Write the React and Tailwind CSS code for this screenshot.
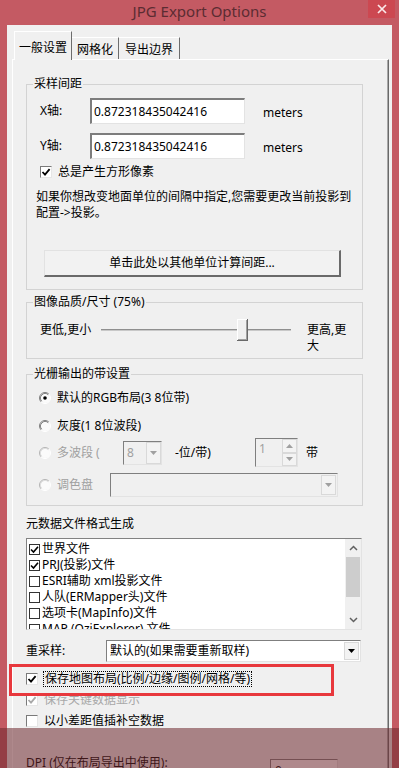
import React from "react";

const sunken =
  "border border-t-[#7f7f7f] border-l-[#7f7f7f] border-r-[#e3e3e3] border-b-[#e3e3e3]";

function Tick({ color = "#000" }) {
  return (
    <svg width="10" height="10" viewBox="0 0 10 10">
      <path d="M1.5 5 L4 7.6 L8.6 2.2" stroke={color} strokeWidth="1.8" fill="none" />
    </svg>
  );
}

function Check({ checked, disabled }) {
  return (
    <span
      className={
        "w-[12px] h-[12px] shrink-0 flex items-center justify-center bg-white border border-t-[#7a7a7a] border-l-[#7a7a7a] border-r-[#e6e6e6] border-b-[#e6e6e6]"
      }
    >
      {checked ? <Tick color={disabled ? "#a8a8a8" : "#000"} /> : null}
    </span>
  );
}

function ListCheck({ checked }) {
  return (
    <span className="w-[11px] h-[11px] shrink-0 flex items-center justify-center bg-white border border-[#333]">
      {checked ? (
        <svg width="9" height="9" viewBox="0 0 9 9">
          <path d="M1 4.5 L3.5 7 L8 1.8" stroke="#000" strokeWidth="1.6" fill="none" />
        </svg>
      ) : null}
    </span>
  );
}

function Radio({ selected, disabled }) {
  const dark = disabled ? "#b4b4b4" : "#808080";
  const dark2 = disabled ? "#cfcfcf" : "#404040";
  return (
    <svg width="12" height="12" viewBox="0 0 12 12" className="shrink-0">
      <circle cx="6" cy="6" r="5" fill="#fbfbfb" />
      <path d="M2.11 9.89 A5.5 5.5 0 0 1 9.89 2.11" stroke={dark} fill="none" />
      <path d="M2.82 9.18 A4.5 4.5 0 0 1 9.18 2.82" stroke={dark2} fill="none" strokeOpacity="0.6" />
      <path d="M9.89 2.11 A5.5 5.5 0 0 1 2.11 9.89" stroke="#ffffff" fill="none" />
      {selected ? <circle cx="6" cy="6" r="1.8" fill="#000" /> : null}
    </svg>
  );
}

function Arrow({ color = "#000", up = false }) {
  return (
    <svg width="7" height="4" viewBox="0 0 7 4">
      <polygon points={up ? "0,4 7,4 3.5,0" : "0,0 7,0 3.5,4"} fill={color} />
    </svg>
  );
}

function ArrowBtn({ color = "#000" }) {
  return (
    <div className="w-[15px] h-full shrink-0 bg-[#f3f3f3] border border-[#d9d9d9] flex items-center justify-center">
      <Arrow color={color} />
    </div>
  );
}

function Group({ title, className = "", children }) {
  return (
    <fieldset className={"ml-[13px] w-[337px] border border-[#d3d3d3] " + className}>
      <legend className="ml-[6px] px-[1px] leading-[16px]">{title}</legend>
      {children}
    </fieldset>
  );
}

export default function App() {
  const listItems = [
    ["世界文件", true],
    ["PRJ(投影)文件", true],
    ["ESRI辅助 xml投影文件", false],
    ["人队(ERMapper头)文件", false],
    ["选项卡(MapInfo)文件", false],
    ["MAP (OziExplorer) 文件", false],
  ];

  return (
    <div className="relative w-[399px] h-[768px] overflow-hidden bg-[#c45a63] font-['Noto_Sans','Noto_Sans_CJK_SC',sans-serif] text-[12px] leading-[16px] text-black">
      {/* Title bar */}
      <div className="relative h-[25px] flex justify-center">
        <span className="text-[15px] leading-[22px] text-[#5b2c32]">JPG Export Options</span>
        <div className="absolute right-[4px] top-0 w-[27px] h-[18px] bg-[#cc4851] flex items-center justify-center">
          <svg width="10" height="10" viewBox="0 0 10 10">
            <path d="M1 1 L9 9 M9 1 L1 9" stroke="#fbe9ea" strokeWidth="1.7" />
          </svg>
        </div>
      </div>

      <div className="flex">
        <div className="w-[7px] shrink-0" />
        <div className="w-[385px] h-[743px] bg-[#f0f0f0] flex flex-col">
          {/* Tabs */}
          <div className="h-[34px] shrink-0 flex items-end pl-[7px]">
            <div className="relative z-10 -mb-px w-[58px] h-[29px] bg-[#f0f0f0] border-t border-l border-t-white border-l-white border-r border-r-[#6d6d6d] text-center pt-[8px]">
              一般设置
            </div>
            <div className="w-[47px] h-[22px] border-t border-t-white border-r border-r-[#6d6d6d] text-center pt-[4px]">
              网格化
            </div>
            <div className="w-[61px] h-[22px] border-t border-t-white border-r border-r-[#6d6d6d] text-center pt-[4px]">
              导出边界
            </div>
          </div>

          {/* Tab panel */}
          <div className="ml-[5px] w-[377px] flex-1 border-t border-l border-t-white border-l-white border-r border-r-[#696969] shadow-[inset_-1px_0_0_#a8a8a8] flex flex-col">
            {/* 采样间距 */}
            <Group title="采样间距" className="mt-[16px] pb-[12px]">
              <div className="mt-[6px] h-[26px] flex items-center">
                <span className="ml-[13px] w-[50px]">X轴:</span>
                <div className="w-[155px] h-[26px] bg-white border-l-2 border-t-2 border-l-[#7d7d7d] border-t-[#7d7d7d] border-r border-b border-r-[#e3e3e3] border-b-[#e3e3e3] pl-[2px] flex items-center">
                  0.872318435042416
                </div>
                <span className="ml-[18px] pt-[4px]">meters</span>
              </div>
              <div className="mt-[9px] h-[26px] flex items-center">
                <span className="ml-[13px] w-[50px]">Y轴:</span>
                <div className="w-[155px] h-[26px] bg-white border-l-2 border-t-2 border-l-[#7d7d7d] border-t-[#7d7d7d] border-r border-b border-r-[#e3e3e3] border-b-[#e3e3e3] pl-[2px] flex items-center">
                  0.872318435042416
                </div>
                <span className="ml-[18px] pt-[4px]">meters</span>
              </div>
              <div className="mt-[5px] h-[16px] flex items-center pl-[13px]">
                <Check checked />
                <span className="ml-[6px]">总是产生方形像素</span>
              </div>
              <p className="mt-[9px] ml-[9px]">
                如果你想改变地面单位的间隔中指定,您需要更改当前投影到
                <br />
                配置-&gt;投影。
              </p>
              <div className="mt-[29px] ml-[17px] w-[297px] h-[27px] bg-[#f2f2f2] border-t border-l border-t-[#e2e2e2] border-l-[#e2e2e2] border-r-2 border-b-2 border-r-[#6a6a6a] border-b-[#6a6a6a] flex items-center justify-center">
                单击此处以其他单位计算间距...
              </div>
            </Group>

            {/* 图像品质 */}
            <Group title="图像品质/尺寸 (75%)" className="mt-[4px] pb-[4px]">
              <div className="mt-[8px] h-[36px] flex items-start">
                <span className="ml-[13px] w-[61px] pt-[4px]">更低,更小</span>
                <svg width="190" height="24" viewBox="0 0 190 24" className="shrink-0">
                  <line x1="0" y1="11.5" x2="190" y2="11.5" stroke="#8f8f8f" />
                  <line x1="0" y1="12.5" x2="190" y2="12.5" stroke="#c8c8c8" />
                  <rect x="136" y="1" width="11" height="22" fill="#f0f0f0" />
                  <line x1="136.5" y1="1" x2="136.5" y2="22" stroke="#ffffff" />
                  <line x1="136" y1="1.5" x2="146" y2="1.5" stroke="#ffffff" />
                  <line x1="146.5" y1="1" x2="146.5" y2="23" stroke="#696969" />
                  <line x1="136" y1="22.5" x2="147" y2="22.5" stroke="#696969" />
                  <line x1="145.5" y1="2" x2="145.5" y2="22" stroke="#a0a0a0" />
                  <line x1="137" y1="21.5" x2="146" y2="21.5" stroke="#a0a0a0" />
                </svg>
                <span className="ml-[16px] pt-[4px]">
                  更高,更
                  <br />大
                </span>
              </div>
            </Group>

            {/* 光栅输出的带设置 */}
            <Group title="光栅输出的带设置" className="mt-[7px] pb-[8px]">
              <div className="mt-[8px] h-[16px] flex items-center pl-[12px]">
                <Radio selected />
                <span className="ml-[6px]">默认的RGB布局(3 8位带)</span>
              </div>
              <div className="mt-[12px] h-[16px] flex items-center pl-[12px]">
                <Radio />
                <span className="ml-[6px]">灰度(1 8位波段)</span>
              </div>
              <div className="mt-[4px] h-[29px] flex items-center pl-[12px] text-[#a0a0a0]">
                <Radio disabled />
                <span className="ml-[6px] w-[66px]">多波段 (</span>
                <div className={"w-[39px] h-[24px] bg-[#f0f0f0] flex items-stretch " + sunken}>
                  <span className="flex-1 pl-[3px] leading-[22px]">8</span>
                  <ArrowBtn color="#a0a0a0" />
                </div>
                <span className="ml-[13px] w-[80px] text-black">-位/带)</span>
                <div className={"w-[43px] h-[29px] bg-[#f0f0f0] flex " + sunken}>
                  <span className="flex-1 pl-[3px] pt-[2px]">1</span>
                  <div className="w-[15px] flex flex-col">
                    <div className="flex-1 bg-[#f3f3f3] border border-[#d9d9d9] flex items-center justify-center">
                      <Arrow up color="#a0a0a0" />
                    </div>
                    <div className="flex-1 bg-[#f3f3f3] border border-[#d9d9d9] flex items-center justify-center">
                      <Arrow color="#a0a0a0" />
                    </div>
                  </div>
                </div>
                <span className="ml-[8px] text-black">带</span>
              </div>
              <div className="mt-[6px] h-[24px] flex items-center pl-[12px] text-[#a0a0a0]">
                <Radio disabled />
                <span className="ml-[6px] w-[53px]">调色盘</span>
                <div className={"w-[228px] h-[24px] bg-[#f0f0f0] flex justify-end p-px " + sunken}>
                  <ArrowBtn color="#a0a0a0" />
                </div>
              </div>
            </Group>

            {/* 元数据 */}
            <div className="mt-[10px] ml-[13px]">元数据文件格式生成</div>
            <div className="mt-[6px] ml-[13px] w-[336px] h-[92px] bg-white border border-t-[#828282] border-l-[#828282] border-r-[#e3e3e3] border-b-[#e3e3e3] flex overflow-hidden">
              <div className="flex-1 pt-[2px] pl-[2px]">
                {listItems.map(([label, checked]) => (
                  <div key={label} className="h-[16px] flex items-center">
                    <ListCheck checked={checked} />
                    <span className="ml-[2px] text-[12px] leading-[16px] whitespace-nowrap">{label}</span>
                  </div>
                ))}
              </div>
              <div className="w-[16px] shrink-0 bg-[#f0f0f0] flex flex-col">
                <div className="h-[18px] flex items-center justify-center">
                  <svg width="9" height="6" viewBox="0 0 9 6">
                    <polyline points="1,5 4.5,1.5 8,5" stroke="#606060" strokeWidth="1.5" fill="none" />
                  </svg>
                </div>
                <div className="mx-px h-[40px] bg-[#cdcdcd]" />
                <div className="flex-1" />
                <div className="h-[18px] flex items-center justify-center">
                  <svg width="9" height="6" viewBox="0 0 9 6">
                    <polyline points="1,1 4.5,4.5 8,1" stroke="#606060" strokeWidth="1.5" fill="none" />
                  </svg>
                </div>
              </div>
            </div>

            {/* 重采样 */}
            <div className="mt-[10px] ml-[13px] h-[22px] flex items-center">
              <span className="w-[80px]">重采样:</span>
              <div className={"w-[255px] h-[22px] bg-white flex items-stretch p-px " + sunken}>
                <span className="flex-1 pl-[2px] leading-[18px]">默认的(如果需要重新取样)</span>
                <ArrowBtn color="#000" />
              </div>
            </div>

            <div className="mt-[9px] ml-[13px] h-[16px] flex items-center">
              <Check checked />
              <span className="ml-[5px] px-px border border-dotted border-black leading-[14px]">
                保存地图布局(比例/边缘/图例/网格/等)
              </span>
            </div>
            <div className="mt-[5px] ml-[13px] h-[16px] flex items-center text-[#a8a8a8]">
              <Check checked disabled />
              <span className="ml-[6px]">保存关键数据显示</span>
            </div>
            <div className="mt-[5px] ml-[13px] h-[16px] flex items-center">
              <Check />
              <span className="ml-[6px]">以小差距值插补空数据</span>
            </div>

            <div className="mt-[25px] ml-[13px] flex items-start">
              <span className="w-[244px] pt-px">DPI (仅在布局导出中使用):</span>
              <div className={"mt-[5px] w-[68px] h-[24px] bg-white pl-[4px] leading-[22px] " + sunken}>0</div>
            </div>
          </div>
        </div>
        <div className="w-[7px] shrink-0" />
      </div>

      {/* annotation rectangle */}
      <div className="absolute left-[9px] top-[664px] w-[325px] h-[32px] border-[3px] border-[#e8383d]" />
      {/* translucent overlay at bottom */}
      <div className="absolute left-0 right-0 top-[728px] bottom-0 bg-[rgba(110,40,45,0.55)]" />
    </div>
  );
}
